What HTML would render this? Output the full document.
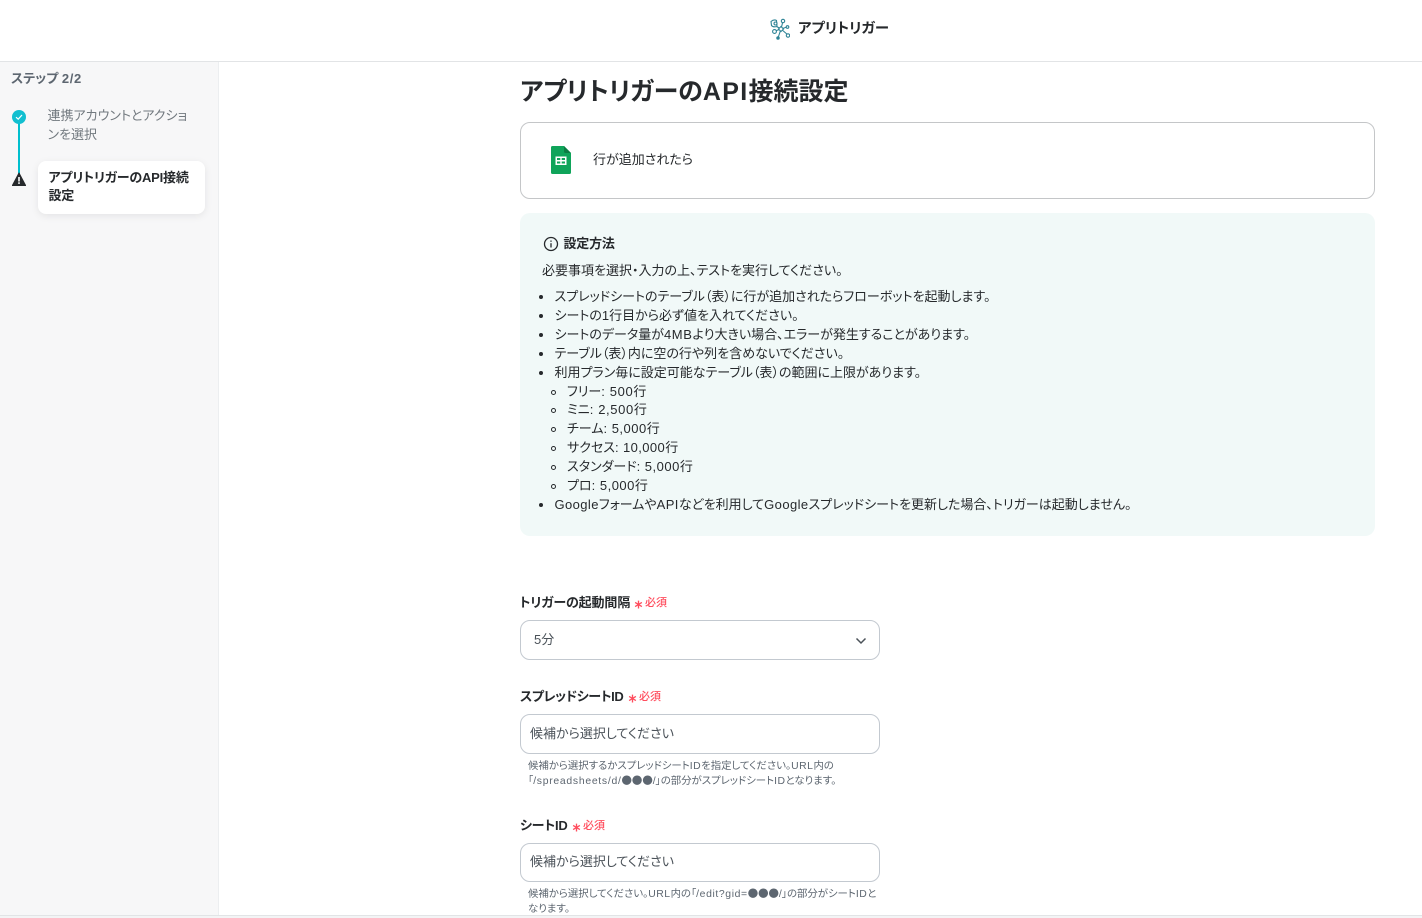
<!DOCTYPE html>
<html lang="ja"><head><meta charset="utf-8"><title>アプリトリガー</title>
<style>
html,body{margin:0;padding:0;width:1422px;height:918px;overflow:hidden;background:#fff}
body{position:relative;font-family:"Liberation Sans","Noto Sans CJK JP",sans-serif;color:#26292c;font-feature-settings:"palt";}
.t{position:absolute;white-space:nowrap;line-height:19px;font-size:13px}
.b{font-weight:700}
.lb{letter-spacing:-.2px}
.l{letter-spacing:.5px}
.m{letter-spacing:.62px}
.c{font-family:"Noto Sans CJK JP",sans-serif;font-feature-settings:normal;line-height:0}
.box{position:absolute;box-sizing:border-box;background:#fff;border:1px solid #c3c9d0;border-radius:10px;left:520px;width:360px;height:40px}
.dot{position:absolute;left:539px;width:4px;height:4px;border-radius:50%;background:#26292c}
.circ{position:absolute;left:551px;width:3px;height:3px;border-radius:50%;border:1px solid #26292c;box-sizing:content-box}
.req{color:#ff4d5e;font-size:11px;font-weight:500}
.ast{position:absolute}
.help{color:#5d6670;font-size:10.4px;line-height:15px}
.ph{color:#4b5259;font-size:13px}
</style></head><body>
<div style="position:absolute;left:0;top:0;width:1422px;height:61px;border-bottom:1px solid #e2e4e6;background:#fff"></div>
<svg style="position:absolute;left:769px;top:18px" width="21" height="22" viewBox="0 0 21 22" fill="none" stroke="#2f8496" stroke-width="1.100"><path d="M5 7L12 11M14 3L12 11M18 9L12 11M6 13L12 11M19 17L12 11M9 20L12 11"/><path d="M2 3.500Q5 1 7.500 2.500L8 8.500Q4 9.500 2.500 7.500Z" fill="#fff"/><circle cx="6.500" cy="5.500" r="1.500" fill="#fff"/><circle cx="14" cy="3" r="1.700" fill="#fff"/><circle cx="18.500" cy="9" r="1.300" fill="#fff"/><circle cx="5.500" cy="13.500" r="1.900" fill="#fff"/><path d="M12 8.500L14.500 11L12 13.500L9.500 11Z" fill="#fff"/><circle cx="19" cy="17.500" r="1.700" fill="#fff"/><circle cx="9" cy="20" r="1.200" fill="#2f8496"/></svg>
<div class="t b" style="left:798px;top:19.500px;font-size:14.400px">アプリトリガー</div>

<div style="position:absolute;left:0;top:62px;width:219px;height:853px;background:#f7f7f8;border-right:1px solid #eceef0;box-sizing:border-box"></div>
<div class="t b" style="left:11px;top:69px;color:#5d6670;font-size:13px">ステップ <span class="m">2/2</span></div>
<div style="position:absolute;left:18px;top:120px;width:2px;height:55px;background:#00bfce"></div>
<svg style="position:absolute;left:12px;top:110px" width="14" height="14" viewBox="0 0 14 14"><circle cx="7" cy="7" r="7" fill="#12bfd0"/><path d="M4 7.200L6.200 9.200L10 5" fill="none" stroke="#fff" stroke-width="1.200"/></svg>
<svg style="position:absolute;left:12px;top:172px" width="14" height="14" viewBox="0 0 14 14"><path d="M7 1L13.600 13.500H.4Z" fill="#26292c" stroke="#26292c" stroke-linejoin="round"/><rect x="6.200" y="5" width="1.600" height="4.500" fill="#fff"/><rect x="6.200" y="10.300" width="1.600" height="1.600" fill="#fff"/></svg>
<div class="t" style="left:47.500px;top:106px;color:#72797f;">連携アカウントとアクショ</div>
<div class="t" style="left:47.500px;top:125px;color:#72797f;">ンを選択</div>
<div style="position:absolute;left:38px;top:161px;width:167px;height:53px;background:#fff;border-radius:8px;box-shadow:0 2px 8px rgba(0,0,0,.08)"></div>
<div class="t b lb" style="left:48.500px;top:168px">アプリトリガーのAPI接続</div>
<div class="t b lb" style="left:48.500px;top:186px">設定</div>

<div class="t b" style="left:520px;top:74px;font-size:25px;line-height:36px">アプリトリガーの<span style="letter-spacing:1.300px">API</span>接続設定</div>

<div style="position:absolute;left:520px;top:122px;width:855px;height:77px;box-sizing:border-box;border:1px solid #c4c6c8;border-radius:10px;background:#fff"></div>
<svg style="position:absolute;left:550px;top:145px" width="22" height="30" viewBox="0 0 22 30"><path d="M2.500 1H14L21 8V27.500A1.500 1.500 0 0 1 19.500 29H2.500A1.500 1.500 0 0 1 1 27.500V2.500A1.500 1.500 0 0 1 2.500 1Z" fill="#0fa45a"/><path d="M14 1L21 8H15.500A1.500 1.500 0 0 1 14 6.500Z" fill="#0b7c43"/><path d="M5.500 11.500H16.500V20H5.500Z M7 13V15H10.300V13Z M11.700 13V15H15V13Z M7 16.500V18.500H10.300V16.500Z M11.700 16.500V18.500H15V16.500Z" fill="#fff" fill-rule="evenodd"/></svg>
<div class="t" style="left:593px;top:150px">行が追加されたら</div>

<div style="position:absolute;left:520px;top:213px;width:855px;height:323px;background:#f1f9f8;border-radius:10px"></div>
<svg style="position:absolute;left:543px;top:236px" width="16" height="16" viewBox="0 0 16 16" fill="none" stroke="#26292c" stroke-width="1.300"><circle cx="8" cy="8" r="6.500"/><path d="M8 7.200V11.500"/><path d="M8 4.500V5.800"/></svg>
<div class="t b lb" style="left:563.500px;top:234px">設定方法</div>
<div class="t" style="left:542px;top:261px">必要事項を選択・入力の上、テストを実行してください。</div>

<div class="dot" style="top:295px"></div><div class="t" style="left:554.500px;top:287px">スプレッドシートのテーブル（表）に行が追加されたらフローボットを起動します。</div>
<div class="dot" style="top:314px"></div><div class="t" style="left:554.500px;top:306px">シートの1行目から必ず値を入れてください。</div>
<div class="dot" style="top:333px"></div><div class="t" style="left:554.500px;top:325px">シートのデータ量が<span class="m">4MB</span>より大きい場合、エラーが発生することがあります。</div>
<div class="dot" style="top:352px"></div><div class="t" style="left:554.500px;top:344px">テーブル（表）内に空の行や列を含めないでください。</div>
<div class="dot" style="top:371px"></div><div class="t" style="left:554.500px;top:363px">利用プラン毎に設定可能なテーブル（表）の範囲に上限があります。</div>
<div class="circ" style="top:390px"></div><div class="t" style="left:567px;top:382px">フリー<span class="m">: 500</span>行</div>
<div class="circ" style="top:408px"></div><div class="t" style="left:567px;top:400px">ミニ<span class="m">: 2,500</span>行</div>
<div class="circ" style="top:427px"></div><div class="t" style="left:567px;top:419px">チーム<span class="l">: 5,000</span>行</div>
<div class="circ" style="top:446px"></div><div class="t" style="left:567px;top:438px">サクセス<span style="letter-spacing:.4px">: 10,000</span>行</div>
<div class="circ" style="top:465px"></div><div class="t" style="left:567px;top:457px">スタンダード<span class="l">: 5,000</span>行</div>
<div class="circ" style="top:484px"></div><div class="t" style="left:567px;top:476px">プロ<span class="l">: 5,000</span>行</div>
<div class="dot" style="top:503px"></div><div class="t" style="left:554.500px;top:495px"><span style="letter-spacing:.4px">Google</span>フォームや<span style="letter-spacing:.4px">API</span>などを利用して<span style="letter-spacing:.4px">Google</span>スプレッドシートを更新した場合、トリガーは起動しません。</div>

<div class="t b" style="left:519.500px;top:593px;letter-spacing:-.12px">トリガーの起動間隔</div>
<svg class="ast" style="left:633.500px;top:599.500px" width="9" height="9" viewBox="0 0 8 8" stroke="#ff4d5e" stroke-width="1.200"><path d="M4 .5V7.500M1 2.200L7 5.800M7 2.200L1 5.800"/></svg><div class="t req" style="left:645px;top:594px">必須</div>
<div class="box" style="top:620px"></div>
<div class="t ph" style="left:534px;top:630px">5分</div>
<svg style="position:absolute;left:855px;top:636px" width="12" height="10" viewBox="0 0 12 10" fill="none" stroke="#4b5259" stroke-width="1.500"><path d="M1.500 2.500L6 7L10.500 2.500"/></svg>

<div class="t b" style="left:520px;top:687px;letter-spacing:-.4px">スプレッドシートID</div>
<svg class="ast" style="left:627.500px;top:693.500px" width="9" height="9" viewBox="0 0 8 8" stroke="#ff4d5e" stroke-width="1.200"><path d="M4 .5V7.500M1 2.200L7 5.800M7 2.200L1 5.800"/></svg><div class="t req" style="left:639px;top:688px">必須</div>
<div class="box" style="top:714px"></div>
<div class="t ph" style="left:530px;top:724px">候補から選択してください</div>
<div class="t help" style="left:528px;top:759px">候補から選択するかスプレッドシート<span class="l">ID</span>を指定してください。<span class="l">URL</span>内の</div>
<div class="t help" style="left:528px;top:774px">「<span style="letter-spacing:.72px">/spreadsheets/d/</span><span class="c">●●●</span>/」の部分がスプレッドシート<span class="l">ID</span>となります。</div>

<div class="t b lb" style="left:520px;top:816px">シートID</div>
<svg class="ast" style="left:571.500px;top:822.500px" width="9" height="9" viewBox="0 0 8 8" stroke="#ff4d5e" stroke-width="1.200"><path d="M4 .5V7.500M1 2.200L7 5.800M7 2.200L1 5.800"/></svg><div class="t req" style="left:583px;top:817px">必須</div>
<div class="box" style="top:843px;height:39px"></div>
<div class="t ph" style="left:530px;top:852px">候補から選択してください</div>
<div class="t help" style="left:528px;top:887px">候補から選択してください。<span class="l">URL</span>内の「<span class="m">/edit?gid=</span><span class="c">●●●</span>/」の部分がシート<span class="l">ID</span>と</div>
<div class="t help" style="left:528px;top:902px">なります。</div>

<div style="position:absolute;left:0;top:915px;width:1422px;height:3px;background:#f3f4f5;border-top:1px solid #e2e4e6;box-sizing:border-box"></div>
</body></html>
